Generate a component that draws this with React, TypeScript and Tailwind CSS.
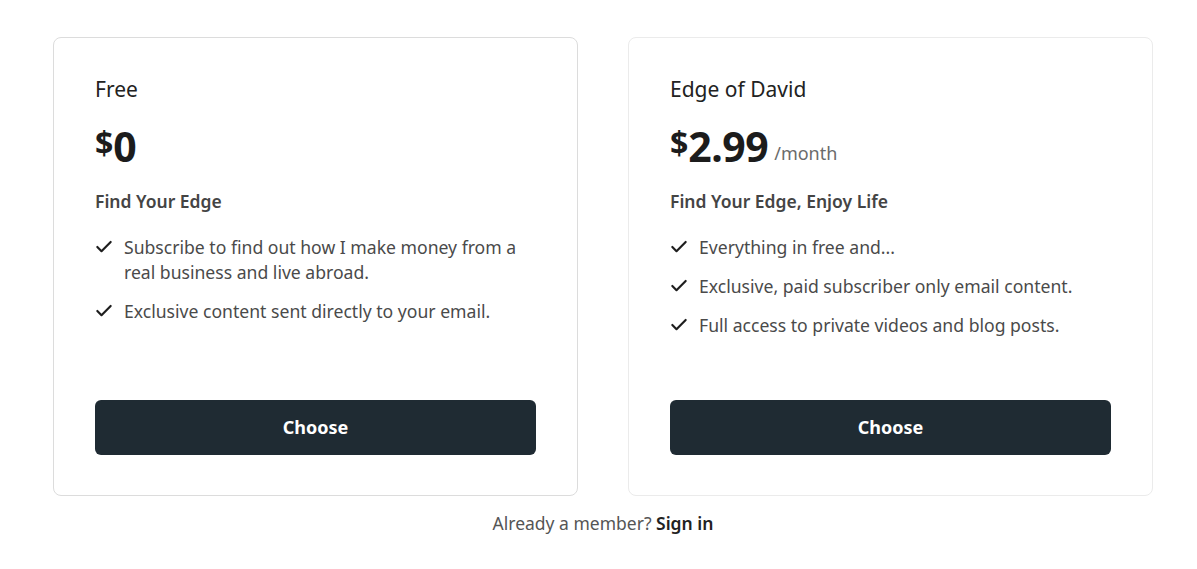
import React from 'react';
import { Check } from 'lucide-react';

interface Plan {
  name: string;
  price: string;
  period?: string;
  tagline: string;
  features: string[];
  border: string;
}

const plans: Plan[] = [
  {
    name: 'Free',
    price: '0',
    tagline: 'Find Your Edge',
    features: [
      'Subscribe to find out how I make money from a real business and live abroad.',
      'Exclusive content sent directly to your email.',
    ],
    border: 'border-[#dcdcdc]',
  },
  {
    name: 'Edge of David',
    price: '2.99',
    period: '/month',
    tagline: 'Find Your Edge, Enjoy Life',
    features: [
      'Everything in free and...',
      'Exclusive, paid subscriber only email content.',
      'Full access to private videos and blog posts.',
    ],
    border: 'border-[#ebebeb]',
  },
];

const PlanCard: React.FC<{ plan: Plan }> = ({ plan }) => (
  <div className={`w-[525px] h-[459px] bg-white border rounded-lg px-[41px] pt-[37px] pb-[40px] flex flex-col ${plan.border}`}>
    <h3 className="text-[21px] leading-[28px] text-[#222]">{plan.name}</h3>
    <div className="flex items-baseline mt-[18px] text-[#1c1c1c]">
      <span className="text-[32px] font-bold leading-none relative -top-[7px]">$</span>
      <span className="text-[41px] font-bold leading-[50px] tracking-[-0.5px]">{plan.price}</span>
      {plan.period && <span className="ml-[6px] text-[18px] text-[#6b6b6b] relative -top-[2px]">{plan.period}</span>}
    </div>
    <p className="mt-[18px] text-[17.5px] leading-[24px] font-semibold text-[#444]">{plan.tagline}</p>
    <ul className="mt-[22px] flex flex-col gap-[14px]">
      {plan.features.map((f, i) => (
        <li key={i} className="flex items-start text-[17.6px] leading-[25px] text-[#4a4a4a]">
          <Check size={20} strokeWidth={2.6} className="text-[#1e1e1e] mt-[2px] mr-[10px] -ml-[1px] shrink-0" />
          <span className="w-[405px]">{f}</span>
        </li>
      ))}
    </ul>
    <button className="mt-auto h-[55px] w-full rounded-md bg-[#1f2b33] text-white text-[18px] font-bold">
      Choose
    </button>
  </div>
);

export default function App() {
  return (
    <div
      className="min-h-screen bg-white pl-[53px] pt-[37px]"
      style={{ fontFamily: '"Noto Sans", "Open Sans", sans-serif' }}
    >
      <div className="w-[1100px]">
        <div className="flex gap-[50px]">
          {plans.map((p) => (
            <PlanCard key={p.name} plan={p} />
          ))}
        </div>
        <p className="mt-[15px] text-center text-[17.5px] leading-[24px] text-[#555]">
          Already a member? <a className="font-semibold text-[#222] cursor-pointer">Sign in</a>
        </p>
      </div>
    </div>
  );
}
